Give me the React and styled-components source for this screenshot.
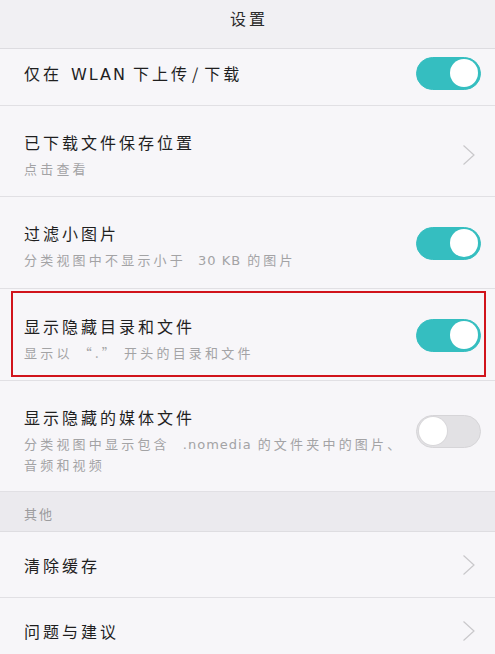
import React from "react";
import styled, { createGlobalStyle } from "styled-components";

const GlobalStyle = createGlobalStyle`
    body {
        margin: 0;
        background: #f7f6f9;
        font-family: "Noto Sans CJK SC", "Noto Sans", sans-serif;
    }
`
const Page = styled.div`
    width: 495px;
    min-height: 654px;
    background: #f7f6f9;
    overflow: hidden;
`
const Header = styled.div`
    height: 49px;
    display: flex;
    align-items: center;
    justify-content: center;
    background: #f1f0f3;
    border-bottom: 1px solid #dddce0;
    font-size: 16px;
    letter-spacing: 3px;
    color: #2b2b2b;
    padding: 0 0 12px 3px;
    box-sizing: border-box;
`
const Row = styled.div`
    position: relative;
    display: flex;
    align-items: center;
    box-sizing: border-box;
    min-height: ${props => props.$height || 66}px;
    padding: ${props => props.$pad || "0"};
    padding-left: 24px;
    padding-right: 14px;
    border-bottom: 1px solid #e1e0e4;
`
const Texts = styled.div`
    flex: 1;
    display: flex;
    flex-direction: column;
    align-self: ${props => props.$top ? "flex-start" : "center"};
`
const Title = styled.div`
    font-size: 16px;
    line-height: 24px;
    letter-spacing: 3px;
    color: #1f1f1f;
`
const Sub = styled.div`
    margin-top: 5px;
    font-size: 13px;
    line-height: 20px;
    letter-spacing: 3.2px;
    color: #a3a3a5;
    white-space: nowrap;
`
const Latin = styled.span`
    font-family: "DejaVu Sans", sans-serif;
    letter-spacing: ${props => props.$wide ? 2 : 1}px;
    margin: 0 ${props => props.$wide ? 6 : 6}px 0 ${props => props.$left || 9}px;
`
const Slash = styled.span`
    margin: 0 3px 0 2px;
`
const Track = styled.div`
    flex: none;
    width: 65px;
    height: 33px;
    border-radius: 17px;
    box-sizing: border-box;
    background: ${props => props.$on ? "#35bec0" : "#e2e1e4"};
    border: 1px solid ${props => props.$on ? "#35bec0" : "#d6d5d8"};
    display: flex;
    align-items: center;
    justify-content: ${props => props.$on ? "flex-end" : "flex-start"};
    padding: 0 2px;
    margin-top: ${props => props.$shift || 0}px;
`
const Knob = styled.div`
    width: 28px;
    height: 28px;
    border-radius: 50%;
    background: #fff;
    box-shadow: ${props => props.$on ? "none" : "0 0 0 1px #d8d7da"};
`
const Chevron = styled.svg`
    flex: none;
    width: 14px;
    height: 22px;
    margin-right: 5px;
`
const Section = styled.div`
    height: 40px;
    display: flex;
    align-items: center;
    padding: 3px 0 0 24px;
    box-sizing: border-box;
    background: #ebeaee;
    border-bottom: 1px solid #dedde1;
    font-size: 13px;
    letter-spacing: 2px;
    color: #9c9c9e;
`
const Highlight = styled.div`
    position: absolute;
    top: 2px;
    bottom: 3px;
    left: 11px;
    right: 9px;
    border: 2px solid #d1141c;
    pointer-events: none;
`

const Toggle = ({ on, shift }) => (
    <Track $on={on} $shift={shift}>
        <Knob $on={on} />
    </Track>
)

const Arrow = () => (
    <Chevron viewBox="0 0 14 22">
        <path d="M1.5 1.5 L12 11 L1.5 20.5" fill="none" stroke="#c9c8cb" strokeWidth="1.2" />
    </Chevron>
)

export default function App() {
    return (
        <Page>
            <GlobalStyle />
            <Header>设置</Header>
            <Row $height={57} $pad="0 0 6px">
                <Texts><Title>仅在<Latin $wide>WLAN</Latin>下上传<Slash>/</Slash>下载</Title></Texts>
                <Toggle on shift={-2} />
            </Row>
            <Row $height={91} $pad="24px 0 17px">
                <Texts>
                    <Title>已下载文件保存位置</Title>
                    <Sub>点击查看</Sub>
                </Texts>
                <Arrow />
            </Row>
            <Row $height={92} $pad="24px 0 17px">
                <Texts>
                    <Title>过滤小图片</Title>
                    <Sub>分类视图中不显示小于<Latin $left={12}>30 KB</Latin>的图片</Sub>
                </Texts>
                <Toggle on shift={-6} />
            </Row>
            <Row $height={92} $pad="24px 0 17px">
                <Texts>
                    <Title>显示隐藏目录和文件</Title>
                    <Sub>显示以 “.” 开头的目录和文件</Sub>
                </Texts>
                <Toggle on shift={-6} />
                <Highlight />
            </Row>
            <Row $height={111} $pad="24px 0 16px">
                <Texts $top>
                    <Title>显示隐藏的媒体文件</Title>
                    <Sub>分类视图中显示包含<Latin $left={13}>.nomedia</Latin>的文件夹中的图片、<br />音频和视频</Sub>
                </Texts>
                <Toggle shift={-18} />
            </Row>
            <Section>其他</Section>
            <Row $height={66}>
                <Texts><Title>清除缓存</Title></Texts>
                <Arrow />
            </Row>
            <Row $height={66}>
                <Texts><Title>问题与建议</Title></Texts>
                <Arrow />
            </Row>
        </Page>
    )
}
